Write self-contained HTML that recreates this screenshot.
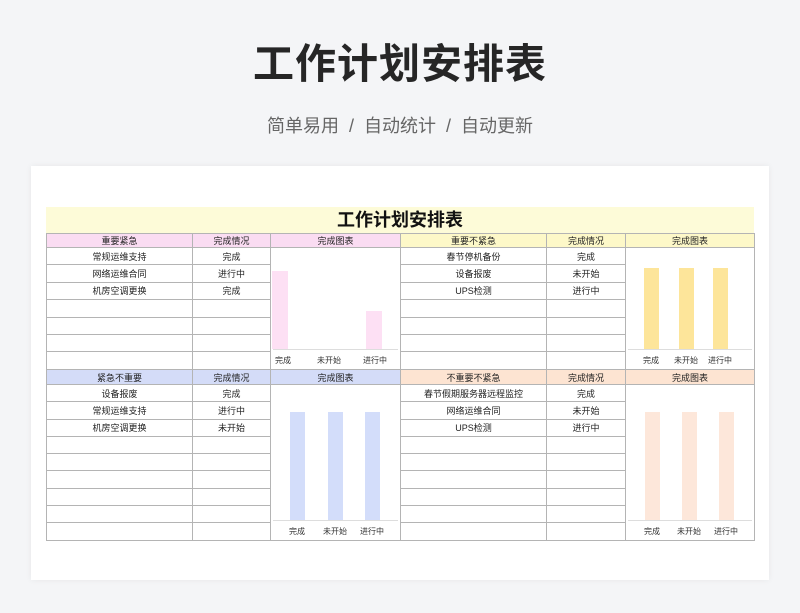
<!DOCTYPE html>
<html><head><meta charset="utf-8"><style>
*{margin:0;padding:0;box-sizing:border-box}
body{width:800px;height:613px;background:#f4f5f7;font-family:"Liberation Sans","Noto Sans CJK SC",sans-serif;position:relative;overflow:hidden}
.t1{position:absolute;top:30px;left:0;width:800px;text-align:center;font-size:41px;font-weight:bold;color:#262626;letter-spacing:1px}
.t2{position:absolute;top:112px;left:0;width:800px;text-align:center;font-size:18px;color:#666}
.card{position:absolute;left:31px;top:166px;width:738px;height:414px;background:#fff;box-shadow:0 0 6px rgba(0,0,0,.06)}
.band{position:absolute;left:46px;top:207px;width:708px;height:26px;background:#fdfbd8;text-align:center;font-size:18px;font-weight:bold;color:#111;line-height:26px}
table{position:absolute;border-collapse:collapse;table-layout:fixed;font-size:9px;color:#222}
td{border:1px solid #b4b4b4;text-align:center;padding:0;overflow:hidden;white-space:nowrap}
.ch{position:relative;vertical-align:top}
.bar{position:absolute;bottom:20px;width:16px}
.ax{position:absolute;left:2px;right:2px;bottom:19px;border-top:1px solid #ddd}
.lb{position:absolute;bottom:3px;font-size:8px;color:#333;width:36px;text-align:center}
</style></head><body>
<div class="t1">工作计划安排表</div>
<div class="t2">简单易用 &nbsp;/&nbsp; 自动统计 &nbsp;/&nbsp; 自动更新</div>
<div class="card"></div>
<div class="band">工作计划安排表</div>

<table style="left:46px;top:233px;width:354px">
<colgroup><col style="width:146px"><col style="width:78px"><col style="width:130px"></colgroup>
<tr style="height:14px;background:#fadcf2"><td>重要紧急</td><td>完成情况</td><td>完成图表</td></tr>
<tr style="height:17.4px"><td>常规运维支持</td><td>完成</td><td class="ch" rowspan="7" style="background:#fff"><div class="ax"></div>
<div class="bar" style="left:1px;height:78px;background:#fde0f4"></div>
<div class="bar" style="left:95px;height:38px;background:#fde0f4"></div>
<div class="lb" style="left:-6px">完成</div><div class="lb" style="left:40px">未开始</div><div class="lb" style="left:86px">进行中</div></td></tr>
<tr style="height:17.4px"><td>网络运维合同</td><td>进行中</td></tr>
<tr style="height:17.4px"><td>机房空调更换</td><td>完成</td></tr>
<tr style="height:17.4px"><td></td><td></td></tr>
<tr style="height:17.4px"><td></td><td></td></tr>
<tr style="height:17.4px"><td></td><td></td></tr>
<tr style="height:17.4px"><td></td><td></td></tr>
</table>

<table style="left:400px;top:233px;width:354px">
<colgroup><col style="width:146px"><col style="width:79px"><col style="width:129px"></colgroup>
<tr style="height:14px;background:#fdf8c8"><td>重要不紧急</td><td>完成情况</td><td>完成图表</td></tr>
<tr style="height:17.4px"><td>春节停机备份</td><td>完成</td><td class="ch" rowspan="7"><div class="ax"></div>
<div class="bar" style="left:18px;width:15px;height:81px;background:#fde59a"></div>
<div class="bar" style="left:53px;width:15px;height:81px;background:#fde59a"></div>
<div class="bar" style="left:87px;width:15px;height:81px;background:#fde59a"></div>
<div class="lb" style="left:7px">完成</div><div class="lb" style="left:42px">未开始</div><div class="lb" style="left:76px">进行中</div></td></tr>
<tr style="height:17.4px"><td>设备报废</td><td>未开始</td></tr>
<tr style="height:17.4px"><td>UPS检测</td><td>进行中</td></tr>
<tr style="height:17.4px"><td></td><td></td></tr>
<tr style="height:17.4px"><td></td><td></td></tr>
<tr style="height:17.4px"><td></td><td></td></tr>
<tr style="height:17.4px"><td></td><td></td></tr>
</table>

<table style="left:46px;top:369px;width:354px">
<colgroup><col style="width:146px"><col style="width:78px"><col style="width:130px"></colgroup>
<tr style="height:15px;background:#d4dcf8"><td>紧急不重要</td><td>完成情况</td><td>完成图表</td></tr>
<tr style="height:17.3px"><td>设备报废</td><td>完成</td><td class="ch" rowspan="9"><div class="ax"></div>
<div class="bar" style="left:19px;width:15px;height:108px;background:#d3ddfa"></div>
<div class="bar" style="left:57px;width:15px;height:108px;background:#d3ddfa"></div>
<div class="bar" style="left:94px;width:15px;height:108px;background:#d3ddfa"></div>
<div class="lb" style="left:8px">完成</div><div class="lb" style="left:46px">未开始</div><div class="lb" style="left:83px">进行中</div></td></tr>
<tr style="height:17.3px"><td>常规运维支持</td><td>进行中</td></tr>
<tr style="height:17.3px"><td>机房空调更换</td><td>未开始</td></tr>
<tr style="height:17.3px"><td></td><td></td></tr>
<tr style="height:17.3px"><td></td><td></td></tr>
<tr style="height:17.3px"><td></td><td></td></tr>
<tr style="height:17.3px"><td></td><td></td></tr>
<tr style="height:17.3px"><td></td><td></td></tr>
<tr style="height:17.3px"><td></td><td></td></tr>
</table>

<table style="left:400px;top:369px;width:354px">
<colgroup><col style="width:146px"><col style="width:79px"><col style="width:129px"></colgroup>
<tr style="height:15px;background:#fde4d2"><td>不重要不紧急</td><td>完成情况</td><td>完成图表</td></tr>
<tr style="height:17.3px"><td>春节假期服务器远程监控</td><td>完成</td><td class="ch" rowspan="9"><div class="ax"></div>
<div class="bar" style="left:19px;width:15px;height:108px;background:#fde7da"></div>
<div class="bar" style="left:56px;width:15px;height:108px;background:#fde7da"></div>
<div class="bar" style="left:93px;width:15px;height:108px;background:#fde7da"></div>
<div class="lb" style="left:8px">完成</div><div class="lb" style="left:45px">未开始</div><div class="lb" style="left:82px">进行中</div></td></tr>
<tr style="height:17.3px"><td>网络运维合同</td><td>未开始</td></tr>
<tr style="height:17.3px"><td>UPS检测</td><td>进行中</td></tr>
<tr style="height:17.3px"><td></td><td></td></tr>
<tr style="height:17.3px"><td></td><td></td></tr>
<tr style="height:17.3px"><td></td><td></td></tr>
<tr style="height:17.3px"><td></td><td></td></tr>
<tr style="height:17.3px"><td></td><td></td></tr>
<tr style="height:17.3px"><td></td><td></td></tr>
</table>
</body></html>
